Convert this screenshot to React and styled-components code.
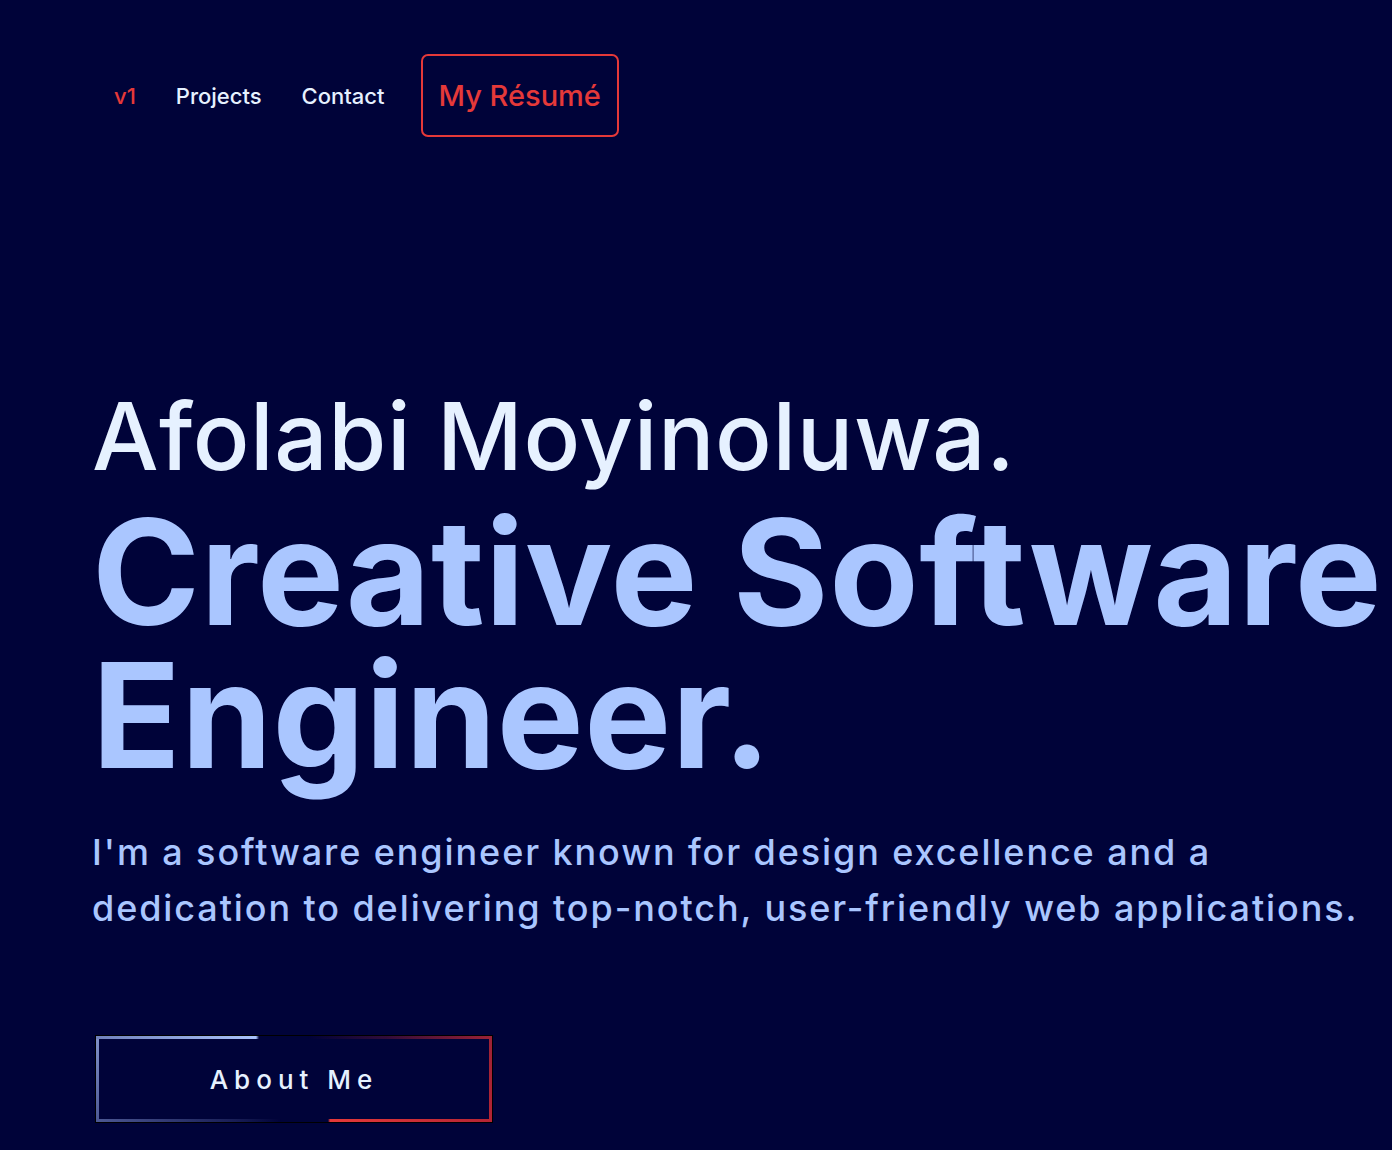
import React from "react"
import styled, { createGlobalStyle } from "styled-components"

const GlobalStyle = createGlobalStyle`
  html, body {
    margin: 0;
    padding: 0;
    background-color: #000339;
    font-family: Inter, "Noto Sans", sans-serif;
    overflow-x: hidden;
  }
`

const Page = styled.div`
  min-height: 1150px;
  background-color: #000339;
`

const Nav = styled.nav`
  display: flex;
  align-items: center;
  padding: 54px 0 0 114px;
`

const NavLink = styled.a`
  font-size: 22px;
  font-weight: 500;
  color: ${props => (props.accent ? "#e53939" : "#e6f1ff")};
  text-decoration: none;
  margin-right: 40px;
`

const ResumeButton = styled.a`
  display: flex;
  align-items: center;
  height: 79px;
  margin-left: -4px;
  padding: 0 16px;
  border: 2px solid #e53939;
  border-radius: 7px;
  color: #e53939;
  font-size: 29px;
  font-weight: 500;
  text-decoration: none;
`

const Hero = styled.section`
  padding: 249px 0 0 92px;
`

const Name = styled.h2`
  margin: 0;
  font-size: 94px;
  font-weight: 500;
  line-height: 101px;
  letter-spacing: 0.6px;
  color: #e6f1ff;
  white-space: nowrap;
`

const Title = styled.h1`
  margin: 14px 0 0;
  font-size: 146px;
  font-weight: 700;
  line-height: 143px;
  letter-spacing: 0.5px;
  color: #aac6ff;
  white-space: nowrap;
`

const Intro = styled.p`
  margin: 37px 0 0;
  font-size: 36px;
  font-weight: 500;
  line-height: 56px;
  letter-spacing: 1.9px;
  color: #aac6ff;
  white-space: nowrap;
`

const AboutButton = styled.a`
  position: relative;
  display: flex;
  align-items: center;
  justify-content: center;
  width: 396px;
  height: 86px;
  margin: 100px 0 0 4px;
  box-sizing: border-box;
  outline: 1px solid #000;
  color: #e6f1ff;
  font-size: 26px;
  font-weight: 500;
  letter-spacing: 6px;
  text-decoration: none;

  &::before {
    content: "";
    position: absolute;
    inset: 0;
    padding: 3px;
    background:
      linear-gradient(to right, #7081bb 0, #a9c3fb 160px, transparent 163px, transparent 212px, rgba(140, 30, 60, 0.35) 290px, #9b2236 100%) top left / 100% 3px no-repeat,
      linear-gradient(to right, #4c5893 0, rgba(60, 70, 130, 0.4) 140px, transparent 185px, transparent 232px, #e53939 234px, #b42434 100%) bottom left / 100% 3px no-repeat,
      linear-gradient(to bottom, #8192c9, #4c5893) top left / 3px 100% no-repeat,
      linear-gradient(to bottom, #9b2236, #b42434) top right / 3px 100% no-repeat;
    -webkit-mask: linear-gradient(#000 0 0) content-box, linear-gradient(#000 0 0);
    -webkit-mask-composite: xor;
    mask-composite: exclude;
  }
`

export default function App() {
  return (
    <Page>
      <GlobalStyle />
      <Nav>
        <NavLink accent href="#">v1</NavLink>
        <NavLink href="#">Projects</NavLink>
        <NavLink href="#">Contact</NavLink>
        <ResumeButton href="#">My Résumé</ResumeButton>
      </Nav>
      <Hero>
        <Name>Afolabi Moyinoluwa.</Name>
        <Title>
          Creative Software
          <br />
          Engineer.
        </Title>
        <Intro>
          I'm a software engineer known for design excellence and a
          <br />
          dedication to delivering top-notch, user-friendly web applications.
        </Intro>
        <AboutButton href="#">About Me</AboutButton>
      </Hero>
    </Page>
  )
}
